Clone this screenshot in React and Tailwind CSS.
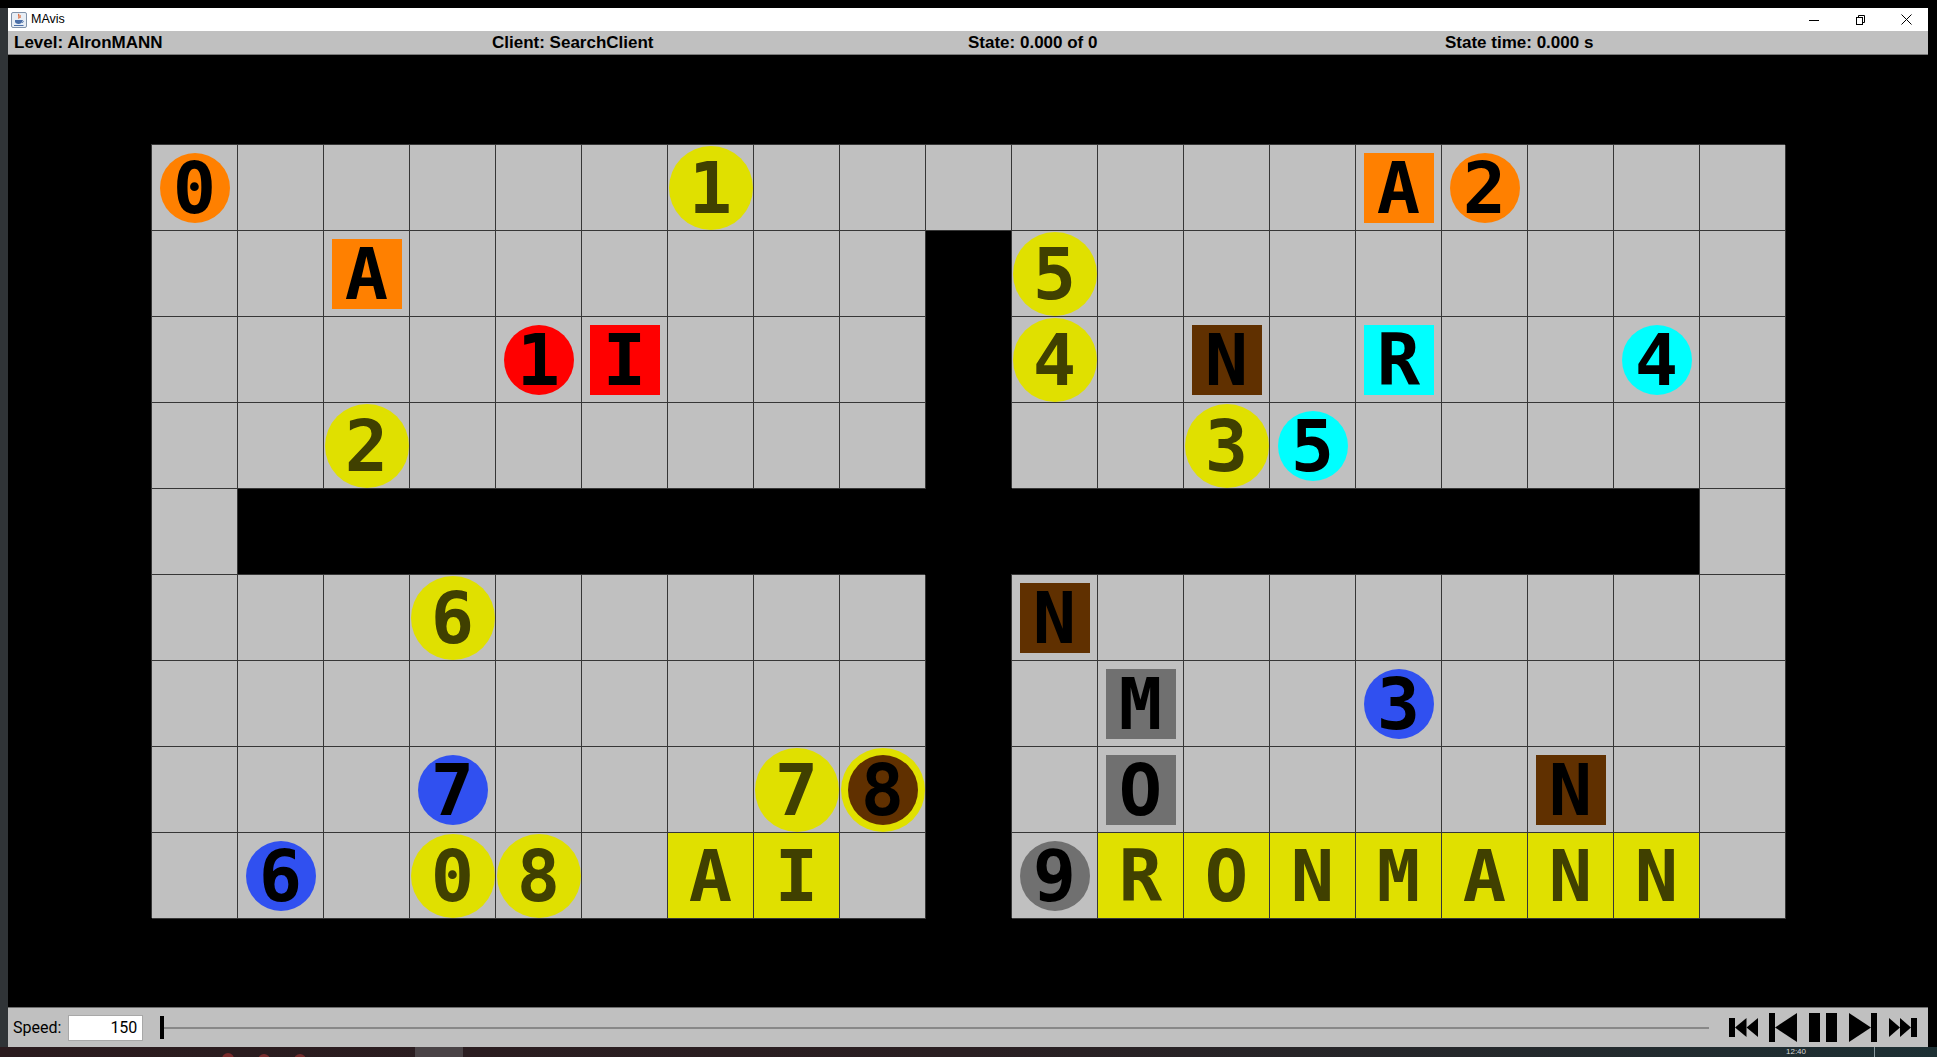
import React from "react";

const COLORS = {
  orange: "bg-[#ff8000]",
  red: "bg-[#ff0000]",
  cyan: "bg-[#00ffff]",
  blue: "bg-[#3050f0]",
  brown: "bg-[#603000]",
  gray: "bg-[#707070]",
};

const ITEMS = {
  "0,0": { t: "agent", l: "0", c: "orange" },
  "0,6": { t: "goal", l: "1" },
  "0,14": { t: "box", l: "A", c: "orange" },
  "0,15": { t: "agent", l: "2", c: "orange" },
  "1,2": { t: "box", l: "A", c: "orange" },
  "1,10": { t: "goal", l: "5" },
  "2,4": { t: "agent", l: "1", c: "red" },
  "2,5": { t: "box", l: "I", c: "red" },
  "2,10": { t: "goal", l: "4" },
  "2,12": { t: "box", l: "N", c: "brown" },
  "2,14": { t: "box", l: "R", c: "cyan" },
  "2,17": { t: "agent", l: "4", c: "cyan" },
  "3,2": { t: "goal", l: "2" },
  "3,12": { t: "goal", l: "3" },
  "3,13": { t: "agent", l: "5", c: "cyan" },
  "5,3": { t: "goal", l: "6" },
  "5,10": { t: "box", l: "N", c: "brown" },
  "6,11": { t: "box", l: "M", c: "gray" },
  "6,14": { t: "agent", l: "3", c: "blue" },
  "7,3": { t: "agent", l: "7", c: "blue" },
  "7,7": { t: "goal", l: "7" },
  "7,8": { t: "agentgoal", l: "8", c: "brown" },
  "7,11": { t: "box", l: "O", c: "gray" },
  "7,16": { t: "box", l: "N", c: "brown" },
  "8,1": { t: "agent", l: "6", c: "blue" },
  "8,3": { t: "goal", l: "0" },
  "8,4": { t: "goal", l: "8" },
  "8,6": { t: "goalbox", l: "A" },
  "8,7": { t: "goalbox", l: "I" },
  "8,10": { t: "agent", l: "9", c: "gray" },
  "8,11": { t: "goalbox", l: "R" },
  "8,12": { t: "goalbox", l: "O" },
  "8,13": { t: "goalbox", l: "N" },
  "8,14": { t: "goalbox", l: "M" },
  "8,15": { t: "goalbox", l: "A" },
  "8,16": { t: "goalbox", l: "N" },
  "8,17": { t: "goalbox", l: "N" },
};

const isWall = (r, c) => (c === 9 && r >= 1) || (r === 4 && c >= 1 && c <= 17);

const glyph = "font-['DejaVu_Sans_Mono',monospace] font-bold text-[72px] leading-none";

function Item({ it }) {
  if (!it) return null;
  if (it.t === "agent") {
    return (
      <div className={`w-[70px] h-[70px] rounded-full flex items-center justify-center text-black ${COLORS[it.c]}`}>
        <span className={glyph}>{it.l}</span>
      </div>
    );
  }
  if (it.t === "box") {
    return (
      <div className={`w-[70px] h-[70px] flex items-center justify-center text-black ${COLORS[it.c]}`}>
        <span className={glyph}>{it.l}</span>
      </div>
    );
  }
  if (it.t === "goal") {
    return (
      <div className="w-[84px] h-[84px] rounded-full flex items-center justify-center bg-[#e0e000] text-[#404000]">
        <span className={glyph}>{it.l}</span>
      </div>
    );
  }
  if (it.t === "goalbox") {
    return (
      <div className="w-full h-full flex items-center justify-center bg-[#e0e000] text-[#404000]">
        <span className={glyph}>{it.l}</span>
      </div>
    );
  }
  if (it.t === "agentgoal") {
    return (
      <div className="w-[84px] h-[84px] rounded-full flex items-center justify-center bg-[#e0e000]">
        <div className={`w-[70px] h-[70px] rounded-full flex items-center justify-center text-black ${COLORS[it.c]}`}>
          <span className={glyph}>{it.l}</span>
        </div>
      </div>
    );
  }
  return null;
}

function Cell({ r, c }) {
  if (isWall(r, c)) return <div className="w-[86px] h-[86px] bg-black" />;
  return (
    <div className="w-[86px] h-[86px] bg-[#c0c0c0] border-r border-b border-[#363636] shadow-[-1px_-1px_0_0_#363636] flex items-center justify-center">
      <Item it={ITEMS[`${r},${c}`]} />
    </div>
  );
}

function JavaIcon() {
  return (
    <svg width="16" height="16" viewBox="0 0 16 16">
      <rect x="0.5" y="0.5" width="15" height="15" rx="1.5" fill="#e8eef5" stroke="#8193aa" />
      <path d="M8 2 C6.5 3.5 9.5 4.5 7.5 6.5" stroke="#e0602a" strokeWidth="1.2" fill="none" />
      <path d="M9.5 3 C8.5 4 10 5 9 6" stroke="#e0602a" strokeWidth="0.9" fill="none" />
      <path d="M4 8 H11 V9.5 C11 11 9.5 12 7.5 12 C5.5 12 4 11 4 9.5 Z" fill="#4b6fa8" />
      <path d="M11 8.5 C12.8 8.5 12.8 10.5 11 10.5" stroke="#4b6fa8" strokeWidth="0.9" fill="none" />
      <rect x="3" y="13" width="9.5" height="1" fill="#4b6fa8" />
    </svg>
  );
}

function TitleControls() {
  return (
    <div className="flex items-center gap-[36px] mr-[16px]">
      <svg width="10" height="10" viewBox="0 0 10 10">
        <line x1="0" y1="5.5" x2="10" y2="5.5" stroke="#000" strokeWidth="1" />
      </svg>
      <svg width="10" height="10" viewBox="0 0 10 10">
        <rect x="1.5" y="2.5" width="6" height="7" fill="none" stroke="#000" strokeWidth="1" />
        <path d="M3.5 2.5 V0.5 H9.5 V7.5 H7.5" fill="none" stroke="#000" strokeWidth="1" />
      </svg>
      <svg width="11" height="11" viewBox="0 0 11 11">
        <line x1="0.5" y1="0.5" x2="10.5" y2="10.5" stroke="#000" strokeWidth="1" />
        <line x1="10.5" y1="0.5" x2="0.5" y2="10.5" stroke="#000" strokeWidth="1" />
      </svg>
    </div>
  );
}

function PlayControls() {
  return (
    <div className="flex items-center">
      <svg width="29" height="19" viewBox="0 0 29 19" className="shrink-0">
        <rect x="0" y="0" width="6" height="19" fill="#000" />
        <polygon points="6,9.5 17.5,0 17.5,19" fill="#000" />
        <polygon points="17.5,9.5 29,0 29,19" fill="#000" />
      </svg>
      <svg width="28" height="29" viewBox="0 0 28 29" className="shrink-0 ml-[11px]">
        <rect x="0" y="0" width="6" height="29" fill="#000" />
        <polygon points="6,14.5 28,0 28,29" fill="#000" />
      </svg>
      <svg width="28" height="29" viewBox="0 0 28 29" className="shrink-0 ml-[12px]">
        <rect x="0" y="0" width="11" height="29" fill="#000" />
        <rect x="17" y="0" width="11" height="29" fill="#000" />
      </svg>
      <svg width="28" height="29" viewBox="0 0 28 29" className="shrink-0 ml-[12px]">
        <polygon points="0,0 22,14.5 0,29" fill="#000" />
        <rect x="22" y="0" width="6" height="29" fill="#000" />
      </svg>
      <svg width="28" height="19" viewBox="0 0 28 19" className="shrink-0 ml-[12px]">
        <polygon points="0,0 11,9.5 0,19" fill="#000" />
        <polygon points="11,0 22,9.5 11,19" fill="#000" />
        <rect x="22" y="0" width="6" height="19" fill="#000" />
      </svg>
    </div>
  );
}

export default function App() {
  const rows = Array.from({ length: 9 }, (_, r) => r);
  const cols = Array.from({ length: 19 }, (_, c) => c);
  const statusFont = "font-['Liberation_Sans',Arial,sans-serif] font-bold text-[17px] text-black leading-none";
  const uiFont = "font-['Roboto','Liberation_Sans',sans-serif] text-[16px] text-black leading-none";

  return (
    <div className="w-[1937px] h-[1057px] bg-black flex flex-col overflow-hidden">
      <div className="h-[8px] shrink-0 bg-black" />
      <div className="flex flex-1 min-h-0">
        <div className="w-[8px] shrink-0 bg-[#303437]" />
        <div className="w-[1920px] shrink-0 flex flex-col">
          {/* title bar */}
          <div className="h-[23px] shrink-0 bg-white flex items-center justify-between">
            <div className="flex items-center pl-[3px] gap-[4px]">
              <JavaIcon />
              <span className="font-['Liberation_Sans',Arial,sans-serif] text-[12.5px] text-black leading-none">MAvis</span>
            </div>
            <TitleControls />
          </div>
          {/* status bar */}
          <div className="h-[24px] shrink-0 bg-[#c0c0c0] border-b border-[#7a7a7a] grid grid-cols-[478px_476px_477px_1fr] items-center pl-[6px]">
            <span className={statusFont}>Level: AIronMANN</span>
            <span className={statusFont}>Client: SearchClient</span>
            <span className={statusFont}>State: 0.000 of 0</span>
            <span className={statusFont}>State time: 0.000 s</span>
          </div>
          {/* playfield */}
          <div className="flex-1 min-h-0 bg-black pt-[90px] pl-[144px]">
            <div className="grid grid-cols-[repeat(19,86px)] grid-rows-[repeat(9,86px)] w-[1634px]">
              {rows.map((r) => cols.map((c) => <Cell key={`${r}-${c}`} r={r} c={c} />))}
            </div>
          </div>
          {/* bottom bar */}
          <div className="h-[40px] shrink-0 bg-[#c0c0c0] border-t border-[#6e6e6e] flex items-center pl-[5px] pr-[11px]">
            <span className={uiFont}>Speed:</span>
            <div className="ml-[7px] w-[75px] h-[26px] bg-white border border-[#a8a8a8] flex items-center justify-end pr-[5px]">
              <span className={uiFont}>150</span>
            </div>
            <div className="ml-[17px] flex-1 flex items-center h-[23px]">
              <div className="w-[4px] h-[23px] bg-black shrink-0" />
              <div className="flex-1 h-[2px] bg-[#888888]" />
            </div>
            <div className="ml-[20px]">
              <PlayControls />
            </div>
          </div>
        </div>
        <div className="flex-1 bg-black" />
      </div>
      {/* taskbar sliver */}
      <div className="h-[10px] shrink-0 bg-gradient-to-r from-[#2b1b1e] via-[#2a1f22] to-[#1d3034] flex items-start overflow-hidden">
        <div className="ml-[222px] mt-[6px] w-[12px] h-[12px] rounded-full bg-[#7a2a2a]" />
        <div className="ml-[24px] mt-[7px] w-[12px] h-[12px] rounded-full bg-[#7a2e2e]" />
        <div className="ml-[24px] mt-[7px] w-[12px] h-[12px] rounded-full bg-[#742c2c]" />
        <div className="ml-[109px] w-[48px] h-[10px] bg-[#4a4346]" />
        <div className="ml-[1323px] mt-[1px] text-[8px] leading-none text-[#d8d8d8] font-['Liberation_Sans',sans-serif]">12:40</div>
        <div className="ml-[68px] w-[1px] h-[10px] bg-[#8a9a9e]" />
      </div>
    </div>
  );
}
